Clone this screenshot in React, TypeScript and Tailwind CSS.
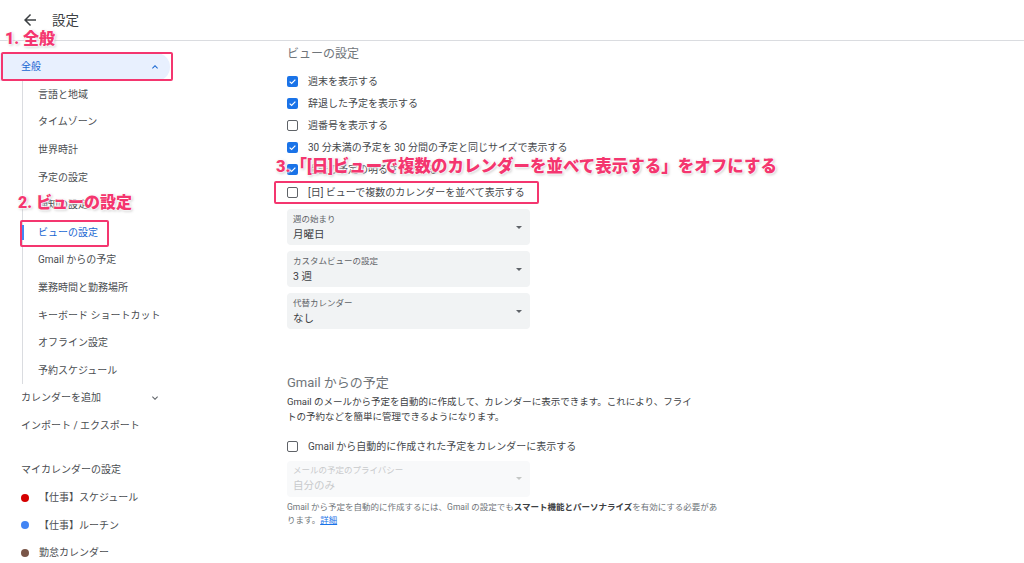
import React from "react";

const Check = ({ checked }: { checked: boolean }) =>
  checked ? (
    <span className="flex h-[11px] w-[11px] shrink-0 items-center justify-center rounded-[2px] bg-[#1a73e8]">
      <svg viewBox="0 0 12 12" className="h-[9px] w-[9px]">
        <path d="M2.2 6.2 L4.8 8.6 L9.8 3.4" fill="none" stroke="white" strokeWidth="1.6" />
      </svg>
    </span>
  ) : (
    <span className="h-[11px] w-[11px] shrink-0 rounded-[2px] border-[1.5px] border-[#5f6368]" />
  );

const Tri = ({ light }: { light?: boolean }) => (
  <svg viewBox="0 0 10 5" className="h-[3px] w-[6px]">
    <path d="M0 0 L10 0 L5 5 Z" fill={light ? "#c4c7c5" : "#5f6368"} />
  </svg>
);

const Select = ({ label, value, disabled }: { label: string; value: string; disabled?: boolean }) => (
  <div
    className={`flex h-[36px] w-[243px] items-center justify-between rounded-[4px] pl-[6px] pr-[8px] ${
      disabled ? "bg-[#f8f9fa]" : "bg-[#f1f3f4]"
    }`}
  >
    <div className="flex flex-col">
      <span className={`text-[8.5px] leading-[12px] ${disabled ? "text-[#c8cacc]" : "text-[#5f6368]"}`}>{label}</span>
      <span className={`mt-[3px] text-[10.5px] leading-[14px] ${disabled ? "text-[#c8cacc]" : "text-[#3c4043]"}`}>{value}</span>
    </div>
    <Tri light={disabled} />
  </div>
);

const CheckRow = ({ checked, label }: { checked: boolean; label: string }) => (
  <div className="flex h-[22.2px] items-center gap-[10px]">
    <Check checked={checked} />
    <span className="text-[10px] text-[#45484c]">{label}</span>
  </div>
);

const annot =
  "absolute whitespace-nowrap font-black text-[#f4366f] [text-shadow:0_0_2px_white,0_0_2px_white,0_0_3px_white,0_0_3px_white,1px_1px_3px_rgba(0,0,0,0.35)]";

export default function App() {
  const sub = [
    "言語と地域",
    "タイムゾーン",
    "世界時計",
    "予定の設定",
    "通知の設定",
    "ビューの設定",
    "Gmail からの予定",
    "業務時間と勤務場所",
    "キーボード ショートカット",
    "オフライン設定",
    "予約スケジュール",
  ];
  const cals = [
    { c: "bg-[#d50000]", t: "【仕事】スケジュール" },
    { c: "bg-[#4285f4]", t: "【仕事】ルーチン" },
    { c: "bg-[#795548]", t: "勤怠カレンダー" },
  ];
  return (
    <div className="relative h-[563px] w-[1024px] overflow-hidden bg-white [font-family:Roboto,'Noto_Sans_CJK_JP',sans-serif]">
      {/* header */}
      <div className="flex h-[41px] items-center border-b border-[#dadce0] pl-[21px]">
        <svg viewBox="0 0 24 24" className="h-[18px] w-[18px]">
          <path d="M20 11H7.83l5.59-5.59L12 4l-8 8 8 8 1.41-1.41L7.83 13H20v-2z" fill="#3c4043" />
        </svg>
        <span className="ml-[13px] text-[13.5px] text-[#3c4043]">設定</span>
      </div>

      <div className="flex">
        {/* sidebar */}
        <div className="w-[180px] shrink-0 pt-[12px] text-[10px] text-[#4a4d51]">
          <div className="flex h-[27.6px] w-[170px] items-center justify-between rounded-r-full bg-[#e8f0fe] pl-[21px] pr-[9px] text-[#1967d2]">
            <span>全般</span>
            <svg viewBox="0 0 24 24" className="h-[12px] w-[12px]">
              <path d="M7.41 15.41 12 10.83l4.59 4.58L18 14l-6-6-6 6z" fill="#1967d2" />
            </svg>
          </div>
          <div className="ml-[22px] border-l border-[#dadce0]">
            {sub.map((s) => (
              <div key={s} className="relative flex h-[27.6px] items-center pl-[15px]">
                {s === "ビューの設定" && (
                  <span className="absolute left-[-1px] top-[6px] h-[15px] w-[2px] bg-[#4285f4]" />
                )}
                <span className={s === "ビューの設定" ? "text-[#1967d2]" : ""}>{s}</span>
              </div>
            ))}
          </div>
          <div className="flex h-[27.6px] w-[170px] items-center justify-between pl-[21px] pr-[9px]">
            <span>カレンダーを追加</span>
            <svg viewBox="0 0 24 24" className="h-[12px] w-[12px]">
              <path d="M7.41 8.59 12 13.17l4.59-4.58L18 10l-6 6-6-6z" fill="#5f6368" />
            </svg>
          </div>
          <div className="flex h-[27.6px] items-center pl-[21px]">インポート / エクスポート</div>
          <div className="mt-[16.8px] flex h-[27.6px] items-center pl-[21px]">マイカレンダーの設定</div>
          {cals.map((c) => (
            <div key={c.t} className="flex h-[27.6px] items-center pl-[21px]">
              <span className={`h-[8px] w-[8px] rounded-full ${c.c}`} />
              <span className="ml-[10px]">{c.t}</span>
            </div>
          ))}
        </div>

        {/* main */}
        <div className="pl-[107px]">
          <div className="flex h-[26px] items-center text-[12px] text-[#70757a]">ビューの設定</div>
          <div className="mt-[3px] flex flex-col">
            <CheckRow checked label="週末を表示する" />
            <CheckRow checked label="辞退した予定を表示する" />
            <CheckRow checked={false} label="週番号を表示する" />
            <CheckRow checked label="30 分未満の予定を 30 分間の予定と同じサイズで表示する" />
            <CheckRow checked label="過去の予定の明るさを下げる" />
            <CheckRow checked={false} label="[日] ビューで複数のカレンダーを並べて表示する" />
          </div>
          <div className="mt-[6px] flex flex-col gap-[6px]">
            <Select label="週の始まり" value="月曜日" />
            <Select label="カスタムビューの設定" value="3 週" />
            <Select label="代替カレンダー" value="なし" />
          </div>

          <div className="mt-[44px] flex h-[20px] items-center text-[13px] text-[#70757a]">Gmail からの予定</div>
          <div className="mt-[1px] text-[9.5px] leading-[15px] text-[#3c4043]">
            Gmail のメールから予定を自動的に作成して、カレンダーに表示できます。これにより、フライ
            <br />
            トの予約などを簡単に管理できるようになります。
          </div>
          <div className="mt-[11.5px] flex h-[22px] items-center gap-[10px]">
            <Check checked={false} />
            <span className="text-[10px] text-[#45484c]">Gmail から自動的に作成された予定をカレンダーに表示する</span>
          </div>
          <div className="mt-[3px]">
            <Select label="メールの予定のプライバシー" value="自分のみ" disabled />
          </div>
          <div className="mt-[4.5px] text-[8.5px] leading-[13px] text-[#70757a]">
            Gmail から予定を自動的に作成するには、Gmail の設定でも
            <b className="font-bold text-[#3c4043]">スマート機能とパーソナライズ</b>
            を有効にする必要があ
            <br />
            ります。<span className="text-[#1a73e8] underline">詳細</span>
          </div>
        </div>
      </div>

      {/* annotations */}
      <div className="absolute left-[1px] top-[52px] h-[29px] w-[172px] rounded-[2px] border-2 border-[#f4366f]" />
      <div className="absolute left-[20px] top-[220px] h-[27px] w-[89px] rounded-[2px] border-2 border-[#f4366f]" />
      <div className="absolute left-[274px] top-[181px] h-[23px] w-[265px] rounded-[2px] border-2 border-[#f4366f]" />
      <div className={`${annot} left-[5px] top-[28px] text-[16px] leading-[22px]`}>1. 全般</div>
      <div className={`${annot} left-[18px] top-[192px] text-[16px] leading-[22px]`}>2. ビューの設定</div>
      <div className={`${annot} left-[276px] top-[156px] text-[16.5px] leading-[22px]`}>
        3.「[日]ビューで複数のカレンダーを並べて表示する」をオフにする
      </div>
    </div>
  );
}
